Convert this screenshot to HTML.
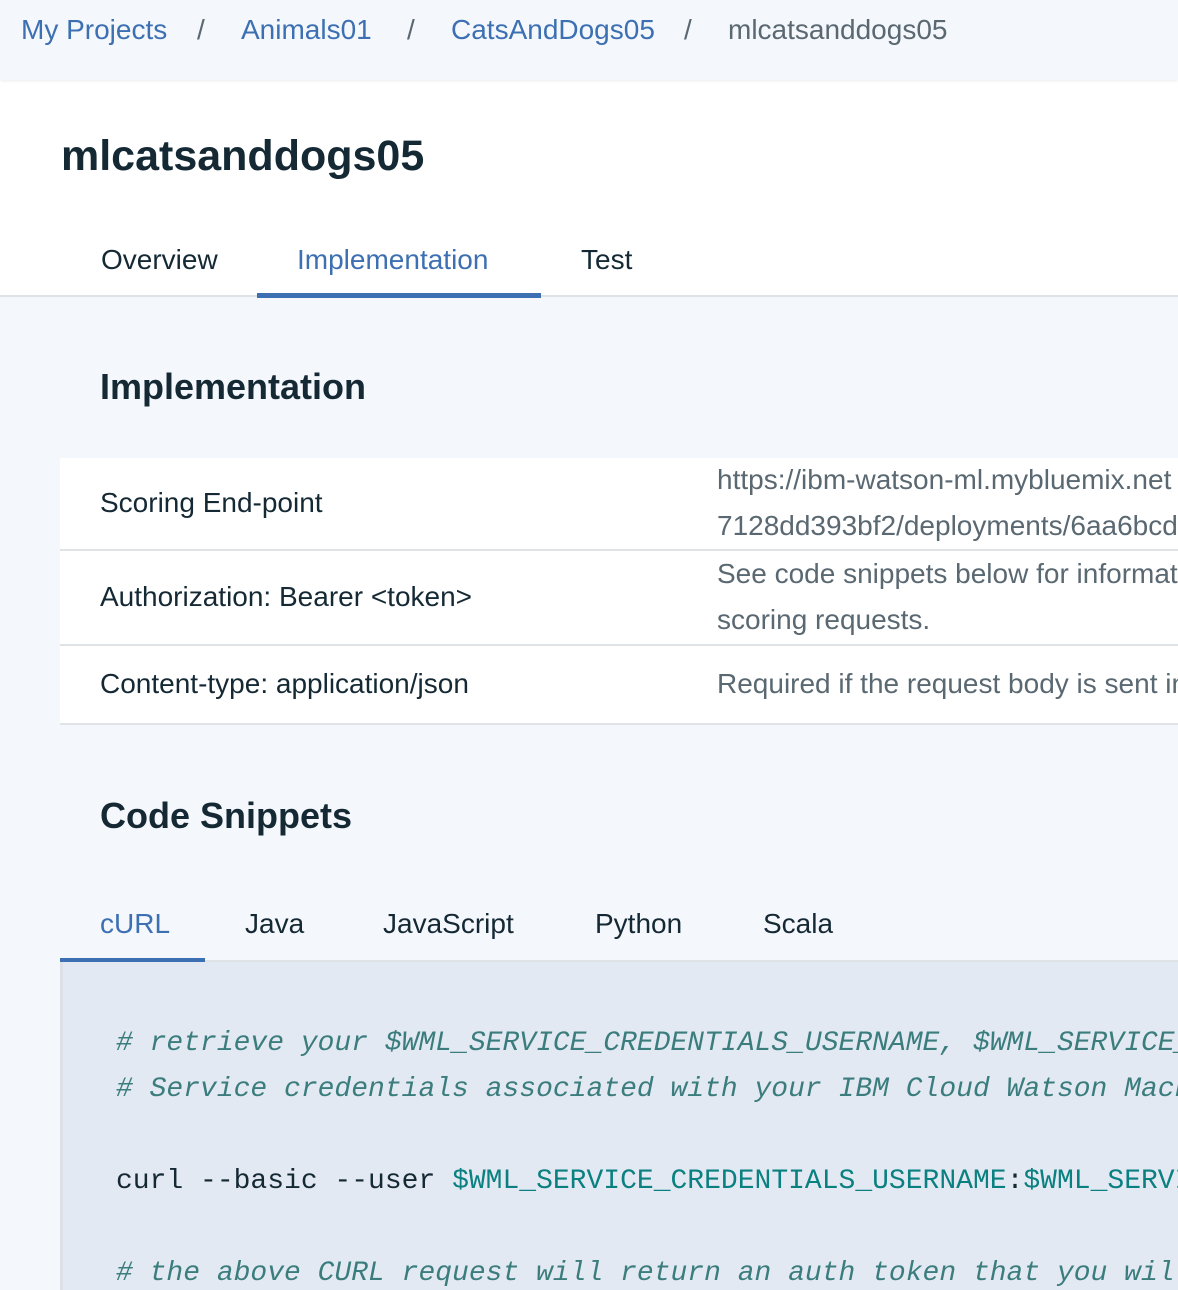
<!DOCTYPE html>
<html><head><meta charset="utf-8"><style>
*{margin:0;padding:0;box-sizing:border-box}
html,body{width:1178px;height:1290px;overflow:hidden;background:#f4f7fb;font-family:"Liberation Sans",sans-serif;color:#152935}
#w{position:relative;width:1178px;height:1290px;overflow:hidden}
.a{position:absolute;white-space:nowrap;line-height:1}
.hdr{position:absolute;left:0;top:0;width:1178px;height:80px;background:#f4f7fb;box-shadow:0 1px 3px rgba(0,0,0,.08);z-index:2;overflow:hidden}
.white{position:absolute;left:0;top:80px;width:1178px;height:217px;background:#fff;border-bottom:2px solid #dfe3e6}
.bc{font-size:28px;color:#3d70b2}
.sep{font-size:28px;color:#5a6872}
.tab{font-size:28px}
.tbl{position:absolute;left:60px;top:458px;width:1118px;height:267px;background:#fff}
.line{position:absolute;left:60px;width:1118px;height:2px;background:#dfe3e6}
.td{font-size:28px;color:#152935}
.tv{font-size:28px;color:#5a6872}
.code{position:absolute;left:60px;top:962px;width:1118px;height:328px;background:#e3e9f3;border-left:3px solid #dde1e7}
.mono{font-family:"Liberation Mono",monospace;font-size:28px}
.cm{color:#3b7d7d;font-style:italic}
.vr{color:#0b8080}
</style></head><body><div id="w">
<div class="hdr">
<span class="a bc" style="left:21px;top:16px">My Projects</span>
<span class="a sep" style="left:197px;top:16px">/</span>
<span class="a bc" style="left:241px;top:16px">Animals01</span>
<span class="a sep" style="left:407px;top:16px">/</span>
<span class="a bc" style="left:451px;top:16px">CatsAndDogs05</span>
<span class="a sep" style="left:684px;top:16px">/</span>
<span class="a sep" style="left:728px;top:16px">mlcatsanddogs05</span>
</div>
<div class="white"></div>
<span class="a" style="left:61px;top:135px;font-size:43px;font-weight:bold">mlcatsanddogs05</span>
<span class="a tab" style="left:101px;top:246px">Overview</span>
<span class="a tab" style="left:297px;top:246px;color:#3d70b2">Implementation</span>
<span class="a tab" style="left:581px;top:246px">Test</span>
<div style="position:absolute;left:257px;top:293px;width:284px;height:5px;background:#3d70b2"></div>

<span class="a" style="left:100px;top:369px;font-size:36px;font-weight:bold">Implementation</span>

<div class="tbl"></div>
<div class="line" style="top:549px"></div>
<div class="line" style="top:644px"></div>
<div class="line" style="top:723px"></div>
<span class="a td" style="left:100px;top:489px">Scoring End-point</span>
<span class="a tv" style="left:717px;top:466px">https://ibm-watson-ml.mybluemix.net</span>
<span class="a tv" style="left:717px;top:512px">7128dd393bf2/deployments/6aa6bcd</span>
<span class="a td" style="left:100px;top:583px">Authorization: Bearer &lt;token&gt;</span>
<span class="a tv" style="left:717px;top:560px">See code snippets below for informati</span>
<span class="a tv" style="left:717px;top:606px">scoring requests.</span>
<span class="a td" style="left:100px;top:670px">Content-type: application/json</span>
<span class="a tv" style="left:717px;top:670px">Required if the request body is sent in</span>

<span class="a" style="left:100px;top:798px;font-size:36px;font-weight:bold">Code Snippets</span>
<span class="a tab" style="left:100px;top:910px;color:#3d70b2">cURL</span>
<span class="a tab" style="left:245px;top:910px">Java</span>
<span class="a tab" style="left:383px;top:910px">JavaScript</span>
<span class="a tab" style="left:595px;top:910px">Python</span>
<span class="a tab" style="left:763px;top:910px">Scala</span>
<div style="position:absolute;left:60px;top:960px;width:1118px;height:2px;background:#dfe3e6"></div>
<div style="position:absolute;left:60px;top:958px;width:145px;height:4px;background:#3d70b2"></div>
<div class="code"></div>
<span class="a mono cm" style="left:116px;top:1030px">#&nbsp;retrieve your $WML_SERVICE_CREDENTIALS_USERNAME, $WML_SERVICE_</span>
<span class="a mono cm" style="left:116px;top:1076px">#&nbsp;Service credentials associated with your IBM Cloud Watson Mach</span>
<span class="a mono" style="left:116px;top:1168px">curl --basic --user <span class="vr">$WML_SERVICE_CREDENTIALS_USERNAME</span>:<span class="vr">$WML_SERVI</span></span>
<span class="a mono cm" style="left:116px;top:1260px">#&nbsp;the above CURL request will return an auth token that you will</span>
</div></body></html>
